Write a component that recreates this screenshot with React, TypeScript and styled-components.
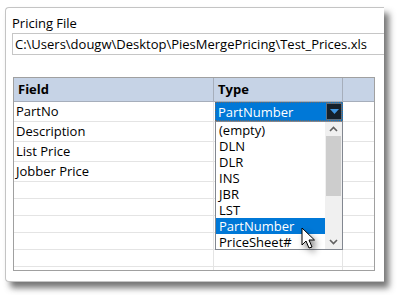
import React from "react";
import styled, { createGlobalStyle } from "styled-components";

const Global = createGlobalStyle`
  html, body { margin: 0; padding: 0; background: #ffffff; }
  body { font-family: "Open Sans", "Noto Sans", sans-serif; color: #000; }
`;

const Page = styled.div`
  width: 398px;
  height: 295px;
  padding: 7px 0 0 5px;
  box-sizing: border-box;
  overflow: hidden;
`;

const Panel = styled.div`
  position: relative;
  width: 379px;
  height: 275px;
  box-sizing: border-box;
  border: 1px solid #c4c4c4;
  border-right: none;
  border-radius: 4px 0 0 4px;
  background: #fff;
  box-shadow: 5px 6px 6px rgba(60, 60, 60, 0.7);
  padding: 6px 0 0 6px;
  display: flex;
  flex-direction: column;
`;

const Label = styled.div`
  font-size: 13px;
  line-height: 18px;
  height: 19px;
`;

const TextBox = styled.div`
  height: 22px;
  box-sizing: border-box;
  border: 1px solid #c6c6c6;
  border-right: none;
  font-size: 13px;
  line-height: 20px;
  padding-left: 2px;
  white-space: nowrap;
  overflow: hidden;
`;

const Grid = styled.div`
  position: relative;
  margin: 22px 0 0 1px;
  width: 362px;
  height: 194px;
  box-sizing: border-box;
  border: 1px solid #a0a0a0;
  display: flex;
  flex-direction: column;
  overflow: hidden;
`;

const cols = "200px 129px 31px";

const HeaderRow = styled.div`
  display: grid;
  grid-template-columns: ${cols};
  height: 23px;
  background: #c6d3e6;
  border-bottom: 1px solid #a6aebb;
  flex: none;
`;

const HeaderCell = styled.div<{ $last?: boolean }>`
  font-weight: 700;
  font-size: 13px;
  line-height: 23px;
  padding-left: 4px;
  border-right: ${(p) => (p.$last ? "none" : "1px solid #a6aebb")};
`;

const Row = styled.div<{ $h: number }>`
  display: grid;
  grid-template-columns: ${cols};
  height: ${(p) => p.$h}px;
  box-sizing: border-box;
  border-bottom: 1px solid #e4e4e4;
  flex: none;
`;

const Cell = styled.div<{ $last?: boolean }>`
  font-size: 13px;
  line-height: 19px;
  padding-left: 2px;
  border-right: ${(p) => (p.$last ? "none" : "1px solid #e4e4e4")};
  white-space: nowrap;
`;

const Combo = styled.div`
  position: absolute;
  left: 201px;
  top: 24px;
  width: 128px;
  height: 19px;
  box-sizing: border-box;
  background: #0078d7;
  color: #fff;
  font-size: 13px;
  line-height: 18px;
  padding-left: 2px;
  border: 1px dotted #6a6a6a;
`;

const ComboButton = styled.div`
  position: absolute;
  right: 0px;
  top: 0px;
  width: 16px;
  height: 17px;
  box-sizing: border-box;
  background: #15202b;
  border: 1px solid #5f6f80;
  display: flex;
  align-items: center;
  justify-content: center;
`;

const ListBox = styled.div`
  position: absolute;
  left: 201px;
  top: 43px;
  width: 128px;
  height: 129px;
  box-sizing: border-box;
  border: 1px solid #828790;
  background: #fff;
  display: flex;
  overflow: hidden;
`;

const Items = styled.div`
  flex: 1;
  display: flex;
  flex-direction: column;
`;

const Item = styled.div<{ $sel?: boolean }>`
  height: 16px;
  flex: none;
  font-size: 13px;
  line-height: 16px;
  padding-left: 3px;
  overflow: hidden;
  background: ${(p) => (p.$sel ? "#0078d7" : "transparent")};
  color: ${(p) => (p.$sel ? "#fff" : "#000")};
`;

const ScrollBar = styled.div`
  width: 17px;
  background: #f0f0f0;
  display: flex;
  flex-direction: column;
  align-items: center;
`;

const ScrollArrow = styled.div`
  height: 14px;
  width: 17px;
  display: flex;
  align-items: center;
  justify-content: center;
  flex: none;
`;

const Thumb = styled.div`
  width: 15px;
  height: 60px;
  background: #cdcdcd;
  flex: none;
`;

const Spacer = styled.div`
  flex: 1;
`;

const Cursor = styled.svg`
  position: absolute;
  left: 301px;
  top: 227px;
  filter: drop-shadow(3px 4px 3px rgba(0, 0, 0, 0.45));
`;

const rows: [string, number][] = [
  ["PartNo", 20],
  ["Description", 20],
  ["List Price", 20],
  ["Jobber Price", 20],
  ["", 17],
  ["", 17],
  ["", 17],
  ["", 17],
  ["", 17],
  ["", 17],
];

const items = ["(empty)", "DLN", "DLR", "INS", "JBR", "LST", "PartNumber", "PriceSheet#"];

export default function App() {
  return (
    <Page>
      <Global />
      <Panel>
        <Label>Pricing File</Label>
        <TextBox>C:\Users\dougw\Desktop\PiesMergePricing\Test_Prices.xls</TextBox>
        <Grid>
          <HeaderRow>
            <HeaderCell>Field</HeaderCell>
            <HeaderCell>Type</HeaderCell>
            <HeaderCell $last />
          </HeaderRow>
          {rows.map(([t, h], i) => (
            <Row key={i} $h={h}>
              <Cell>{t}</Cell>
              <Cell />
              <Cell $last />
            </Row>
          ))}
          <Combo>
            PartNumber
            <ComboButton>
              <svg width="9" height="6" viewBox="0 0 9 6">
                <path d="M0 0 H9 L4.5 5 Z" fill="#3f95e0" />
              </svg>
            </ComboButton>
          </Combo>
          <ListBox>
            <Items>
              {items.map((it) => (
                <Item key={it} $sel={it === "PartNumber"}>
                  {it}
                </Item>
              ))}
            </Items>
            <ScrollBar>
              <ScrollArrow>
                <svg width="9" height="6" viewBox="0 0 9 6">
                  <path d="M1 5 L4.5 1.5 L8 5" stroke="#606060" strokeWidth="1.6" fill="none" />
                </svg>
              </ScrollArrow>
              <Thumb />
              <Spacer />
              <ScrollArrow>
                <svg width="9" height="6" viewBox="0 0 9 6">
                  <path d="M1 1 L4.5 4.5 L8 1" stroke="#606060" strokeWidth="1.6" fill="none" />
                </svg>
              </ScrollArrow>
            </ScrollBar>
          </ListBox>
        </Grid>
      </Panel>
      <Cursor width="20" height="26" viewBox="0 0 20 26">
        <path
          d="M1 1 L1 18 L5 14 L8 21 L11 20 L8 13 L13.5 13 Z"
          fill="#fff"
          stroke="#000"
          strokeWidth="1"
          strokeLinejoin="miter"
        />
      </Cursor>
    </Page>
  );
}
